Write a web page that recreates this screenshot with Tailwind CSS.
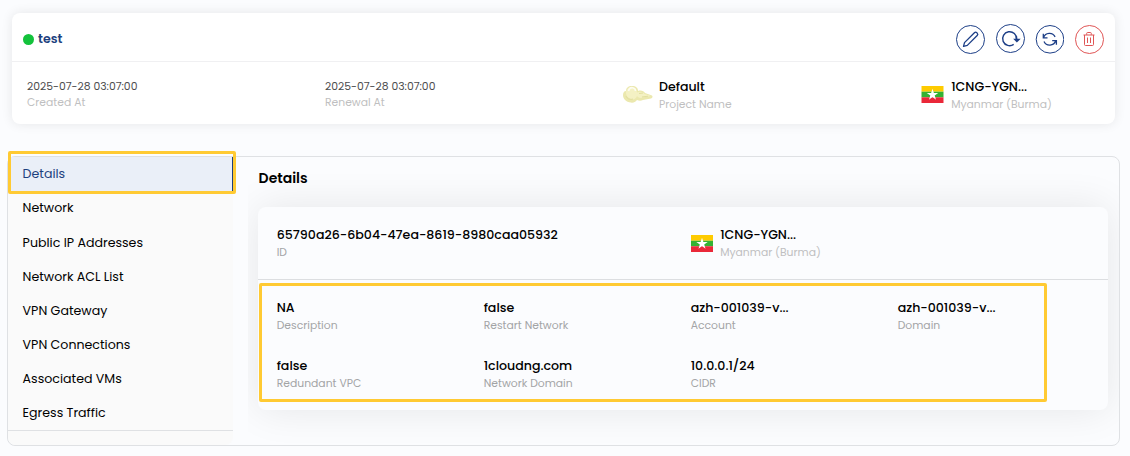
<!DOCTYPE html>
<html lang="en">
<head>
<meta charset="utf-8">
<title>VPC details</title>
<script src="https://cdn.jsdelivr.net/npm/@tailwindcss/browser@4"></script>
</head>
<body class="h-[456px] w-[1130px] overflow-hidden bg-[#fbfcfe] font-['Poppins',Inter,sans-serif] text-[12.6px] text-black">
<svg class="hidden">
  <symbol id="flag" viewBox="0 0 22 17">
    <path fill="#fecb00" d="M0 0h22v5.7H0z"/><path fill="#34b233" d="M0 5.7h22v5.6H0z"/><path fill="#ea2839" d="M0 11.3h22V17H0z"/>
    <path fill="#fff" d="M11 2.8l1.4 4.1h4.3l-3.5 2.6 1.3 4.2-3.5-2.6-3.5 2.6 1.3-4.2-3.5-2.6h4.3z"/>
  </symbol>
</svg>
<main class="pl-2 pt-[13px]">
  <section class="ml-1 h-[111px] w-[1103px] rounded-lg bg-white shadow-[0_0_12px_rgba(0,0,0,0.09)]">
    <header class="flex h-[49px] items-center border-b border-[#f0f0f2] pl-[11px] pr-[11px]">
      <span class="mt-1 size-[11px] rounded-full bg-[#13c23b]"></span>
      <h1 class="ml-1 mt-[3px] flex-1 font-semibold leading-5 text-[#1d3f7e]">test</h1>
      <div class="mt-[4px] flex text-[#1d3f87]">
        <svg class="size-[30px]" viewBox="-.5 -.5 30 30" fill="none" stroke="currentColor"><circle cx="15" cy="15" r="14"/><path stroke-width="1.3" stroke-linejoin="round" d="M8 21.8l1-3.7L18.9 8.2a1.7 1.7 0 0 1 2.4 0l.4.4a1.7 1.7 0 0 1 0 2.4L11.8 20.9z"/></svg>
        <svg class="-mt-px ml-[10px] size-[30px]" viewBox="-.5 -.5 30 30" fill="none" stroke="currentColor"><circle cx="15" cy="15" r="14"/><path stroke-width="1.4" d="M18.2 20.9a7 7 0 1 1 2.9-5.2"/><path fill="currentColor" stroke="none" d="M17.6 15.3h7.6l-3.8 3.8z"/><path stroke-width="1.4" d="M20.9 12.5v4"/></svg>
        <svg class="ml-[9px] size-[30px]" viewBox="-.5 -.5 30 30" fill="none" stroke="currentColor"><circle cx="15.5" cy="14.8" r="13.8"/><path stroke-width="1.3" d="M8.8 9.2v4.1h4.2M9 13.1A6.3 6.3 0 0 1 20.6 12.4M21.9 20.2v-4.1h-4.2M21.2 16.3A6.3 6.3 0 0 1 9.5 17"/></svg>
        <svg class="ml-[10px] size-[30px] text-[#e05555]" viewBox="-.5 -.5 30 30" fill="none" stroke="currentColor"><circle cx="15" cy="15" r="14"/><path d="M9 10.5h11M10 10.5v9.5q0 1 1 1h7q1 0 1-1v-9.500M12.200 10.300V8.900q0-.9.9-.9h2.800q.9 0 .9.900v1.400M13 13v5.500M16 13v5.500"/></svg>
      </div>
    </header>
    <div class="grid grid-cols-[298px_298px_298px_1fr] pl-[15px] pt-[16px] text-[10.8px] leading-4 text-[#bfbfc1]">
      <div class="pt-px"><p class="text-[#4b4b4d]">2025-07-28 03:07:00</p><p>Created At</p></div>
      <div class="pt-px"><p class="text-[#4b4b4d]">2025-07-28 03:07:00</p><p>Renewal At</p></div>
      <div class="flex">
        <svg class="mt-[7px] h-[20px] w-[30px]" viewBox="0 0 30 20"><path fill="#ebe8ae" d="M3 6C3 3 5 1 9 1s6 2 6 5c3-1 6 0 7 2l7 2.500c1 1 .5 2.500-1 3l-8 1.500c-2 1-4 1-6 0-2 2.500-4 3-6 2.500C3 17 0 14 0 10 0 8 1 6 3 6z"/><path fill="#f4f1c4" d="M3 8C3 4 6 2 9 2c3 .5 5 2.500 5 5.500 3-1.500 6-1 7.500 1.500L28 11l-8 1.500c-3 1-5 0-6-1.500-1 3-4 4-6 3-3-1-5-3-5-6z"/><path fill="none" stroke="#fdfcf0" stroke-width="1.6" d="M5.500 6c.5-2.500 2-3.500 4-3.300s3 1.600 3 3.300"/><path stroke="#e2df9f" fill="none" d="M3 11c1 3 4 4 7 3M16 8.500l4-.5M19 12l6-.8"/></svg>
        <div class="ml-[6px]"><p class="text-[12.6px] font-medium leading-[17px] text-black">Default</p><p class="mt-[2px]">Project Name</p></div>
      </div>
      <div class="flex">
        <svg class="mt-2 h-[17px] w-[23px]"><use href="#flag"/></svg>
        <div class="ml-[7.2px]"><p class="text-[12.6px] font-medium leading-[17px] text-black">1CNG-YGN...</p><p class="mt-[2px]">Myanmar (Burma)</p></div>
      </div>
    </div>
  </section>

  <section class="relative -ml-px mt-[32px] flex h-[290px] w-[1113px] rounded-lg border border-[#dfe1e4]">
    <nav class="w-[225px] shrink-0 rounded-lg bg-[#fafafa]">
      <ul class="h-[274px] border-b border-[#dfe1e4] pt-[0.26px] leading-[34.16px] *:pl-[14.6px]">
        <li class="border-r border-[#1d3f7e] bg-[#eaeff8] text-[#1d3f7e]">Details</li>
        <li>Network</li>
        <li>Public IP Addresses</li>
        <li>Network ACL List</li>
        <li>VPN Gateway</li>
        <li>VPN Connections</li>
        <li>Associated VMs</li>
        <li>Egress Traffic</li>
      </ul>
    </nav>
    <div class="ml-[15px] flex-1 overflow-hidden rounded-r-lg pl-[10px]">
      <h2 class="pl-[0.6px] pt-[11px] text-[14px] font-semibold leading-5">Details</h2>
      <div class="mt-[19px] h-[203px] w-[850px] rounded-lg bg-[#fbfcfe] shadow-[0_0_40px_rgba(0,0,0,0.09)]">
        <div class="grid h-[73px] grid-cols-[414px_1fr] border-b border-[#dcdee1] pl-[18.7px] pt-[19px]">
          <div><p class="font-medium leading-[17px]">65790a26-6b04-47ea-8619-8980caa05932</p><p class="mt-[2px] text-[10.8px] leading-4 text-[#a3a4a6]">ID</p></div>
          <div class="flex">
            <svg class="mt-[9px] h-[17px] w-[22px]"><use href="#flag"/></svg>
            <div class="ml-[7.5px]"><p class="font-medium leading-[17px]">1CNG-YGN...</p><p class="mt-[2px] text-[10.8px] leading-4 text-[#bfbfc1]">Myanmar (Burma)</p></div>
          </div>
        </div>
        <dl class="grid grid-cols-[207px_207px_207px_1fr] gap-y-[23px] pl-[18.7px] pt-[19px] [&_dd]:font-medium [&_dd]:leading-[17px] [&_dt]:mt-[2px] [&_dt]:text-[10.8px] [&_dt]:leading-4 [&_dt]:text-[#a3a4a6]">
          <div><dd>NA</dd><dt>Description</dt></div>
          <div><dd>false</dd><dt>Restart Network</dt></div>
          <div><dd>azh-001039-v...</dd><dt>Account</dt></div>
          <div><dd>azh-001039-v...</dd><dt>Domain</dt></div>
          <div><dd>false</dd><dt>Redundant VPC</dt></div>
          <div><dd>1cloudng.com</dd><dt>Network Domain</dt></div>
          <div><dd>10.0.0.1/24</dd><dt>CIDR</dt></div>
        </dl>
      </div>
    </div>
    <div class="absolute -top-[6px] left-0 h-[43px] w-[228px] rounded-[2px] border-3 border-[#ffca33]"></div>
    <div class="absolute left-[251px] top-[126px] h-[119px] w-[788px] rounded-[2px] border-3 border-[#ffca33]"></div>
  </section>
</main>
</body>
</html>
